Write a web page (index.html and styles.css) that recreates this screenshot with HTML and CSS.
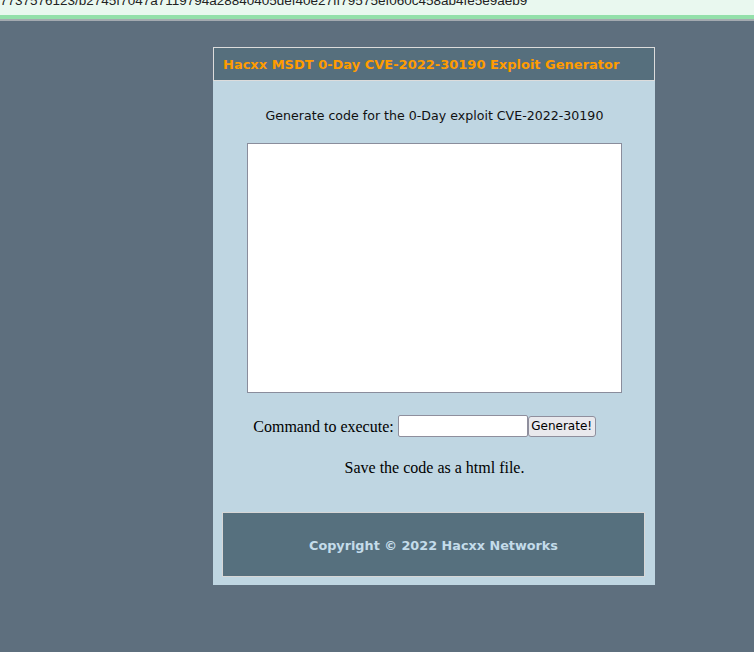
FILE: index.html
```
<!DOCTYPE html>
<html>
<head>
<meta charset="utf-8">
<link rel="stylesheet" href="styles.css">
</head>
<body>
<div class="topstrip"><div class="url">7737576123/b2745f7047a7119794a28840405def40e27ff79575ef060c458ab4fe5e9aeb9</div></div>
<div class="card">
  <div class="header">Hacxx MSDT 0-Day CVE-2022-30190 Exploit Generator</div>
  <div class="body">
    <p class="intro">Generate code for the 0-Day exploit CVE-2022-30190</p>
    <textarea class="code"></textarea>
    <div class="row"><span class="label">Command to execute:</span> <input class="cmd" type="text"><button class="gen">Generate!</button></div>
    <p class="save">Save the code as a html file.</p>
    <div class="footer">Copyright © 2022 Hacxx Networks</div>
  </div>
</div>
</body>
</html>
```
FILE: styles.css
```
html, body {
  margin: 0;
  padding: 0;
  background: #5e6f7e;
  height: 100%;
}
.topstrip {
  height: 15px;
  background: #e9f8ef;
  border-bottom: 4px solid #93e0aa;
  box-shadow: 0 2px 0 #a4aab0;
  overflow: hidden;
}
.url {
  font-family: "Liberation Sans", Arial, sans-serif;
  font-size: 13.5px;
  line-height: 16px;
  margin-top: -7px;
  color: #222;
  white-space: nowrap;
}
.card {
  margin: 28px 0 0 213px;
  width: 442px;
  background: #bfd6e2;
}
.header {
  box-sizing: border-box;
  height: 34px;
  border: 1px solid #dcdcdc;
  background: #566f7d;
  color: #ff9c00;
  font-family: Verdana, "DejaVu Sans", sans-serif;
  font-weight: bold;
  font-size: 13px;
  line-height: 33px;
  padding-left: 9px;
}
.body {
  padding: 0 9px 8px 10px;
  display: flex;
  flex-direction: column;
  align-items: center;
}
.intro {
  margin: 27px 0 0 0;
  font-family: Verdana, "DejaVu Sans", sans-serif;
  font-size: 12.6px;
  line-height: 16px;
  color: #111;
}
.code {
  margin: 19px 0 0 0;
  box-sizing: border-box;
  width: 375px;
  height: 250px;
  border: 1px solid #8a8d9c;
  background: #fff;
  resize: none;
  padding: 2px;
}
.row {
  margin-top: 21px;
  padding-right: 20px;
  height: 22px;
  display: flex;
  align-items: center;
  font-family: "Liberation Serif", "Times New Roman", serif;
  font-size: 16px;
  line-height: 24px;
  padding-top: 2px;
  color: #000;
  white-space: pre;
}
.cmd {
  box-sizing: border-box;
  width: 130px;
  height: 22px;
  margin: -2px 0 0 4px;
  border: 1px solid #8f8f9d;
  border-radius: 2px;
  background: #fff;
}
.gen {
  box-sizing: border-box;
  width: 68px;
  height: 21px;
  margin: -2px 0 0 0;
  padding: 0;
  border: 1px solid #8f8f9d;
  border-radius: 3px;
  background: #e9e9ed;
  font-family: "DejaVu Sans", Verdana, sans-serif;
  font-size: 12px;
  color: #000;
}
.save {
  margin: 20px 0 0 0;
  font-family: "Liberation Serif", "Times New Roman", serif;
  font-size: 16px;
  line-height: 18px;
  padding-top: 1px;
  color: #000;
}
.footer {
  box-sizing: border-box;
  margin-top: 35px;
  margin-left: -1px;
  align-self: flex-start;
  width: 423px;
  height: 65px;
  border: 1px solid #d6d6d6;
  background: #56707e;
  color: #c4dcea;
  font-family: Verdana, "DejaVu Sans", sans-serif;
  font-weight: bold;
  font-size: 12.8px;
  display: flex;
  align-items: center;
  justify-content: center;
  padding-top: 2px;
}
```
